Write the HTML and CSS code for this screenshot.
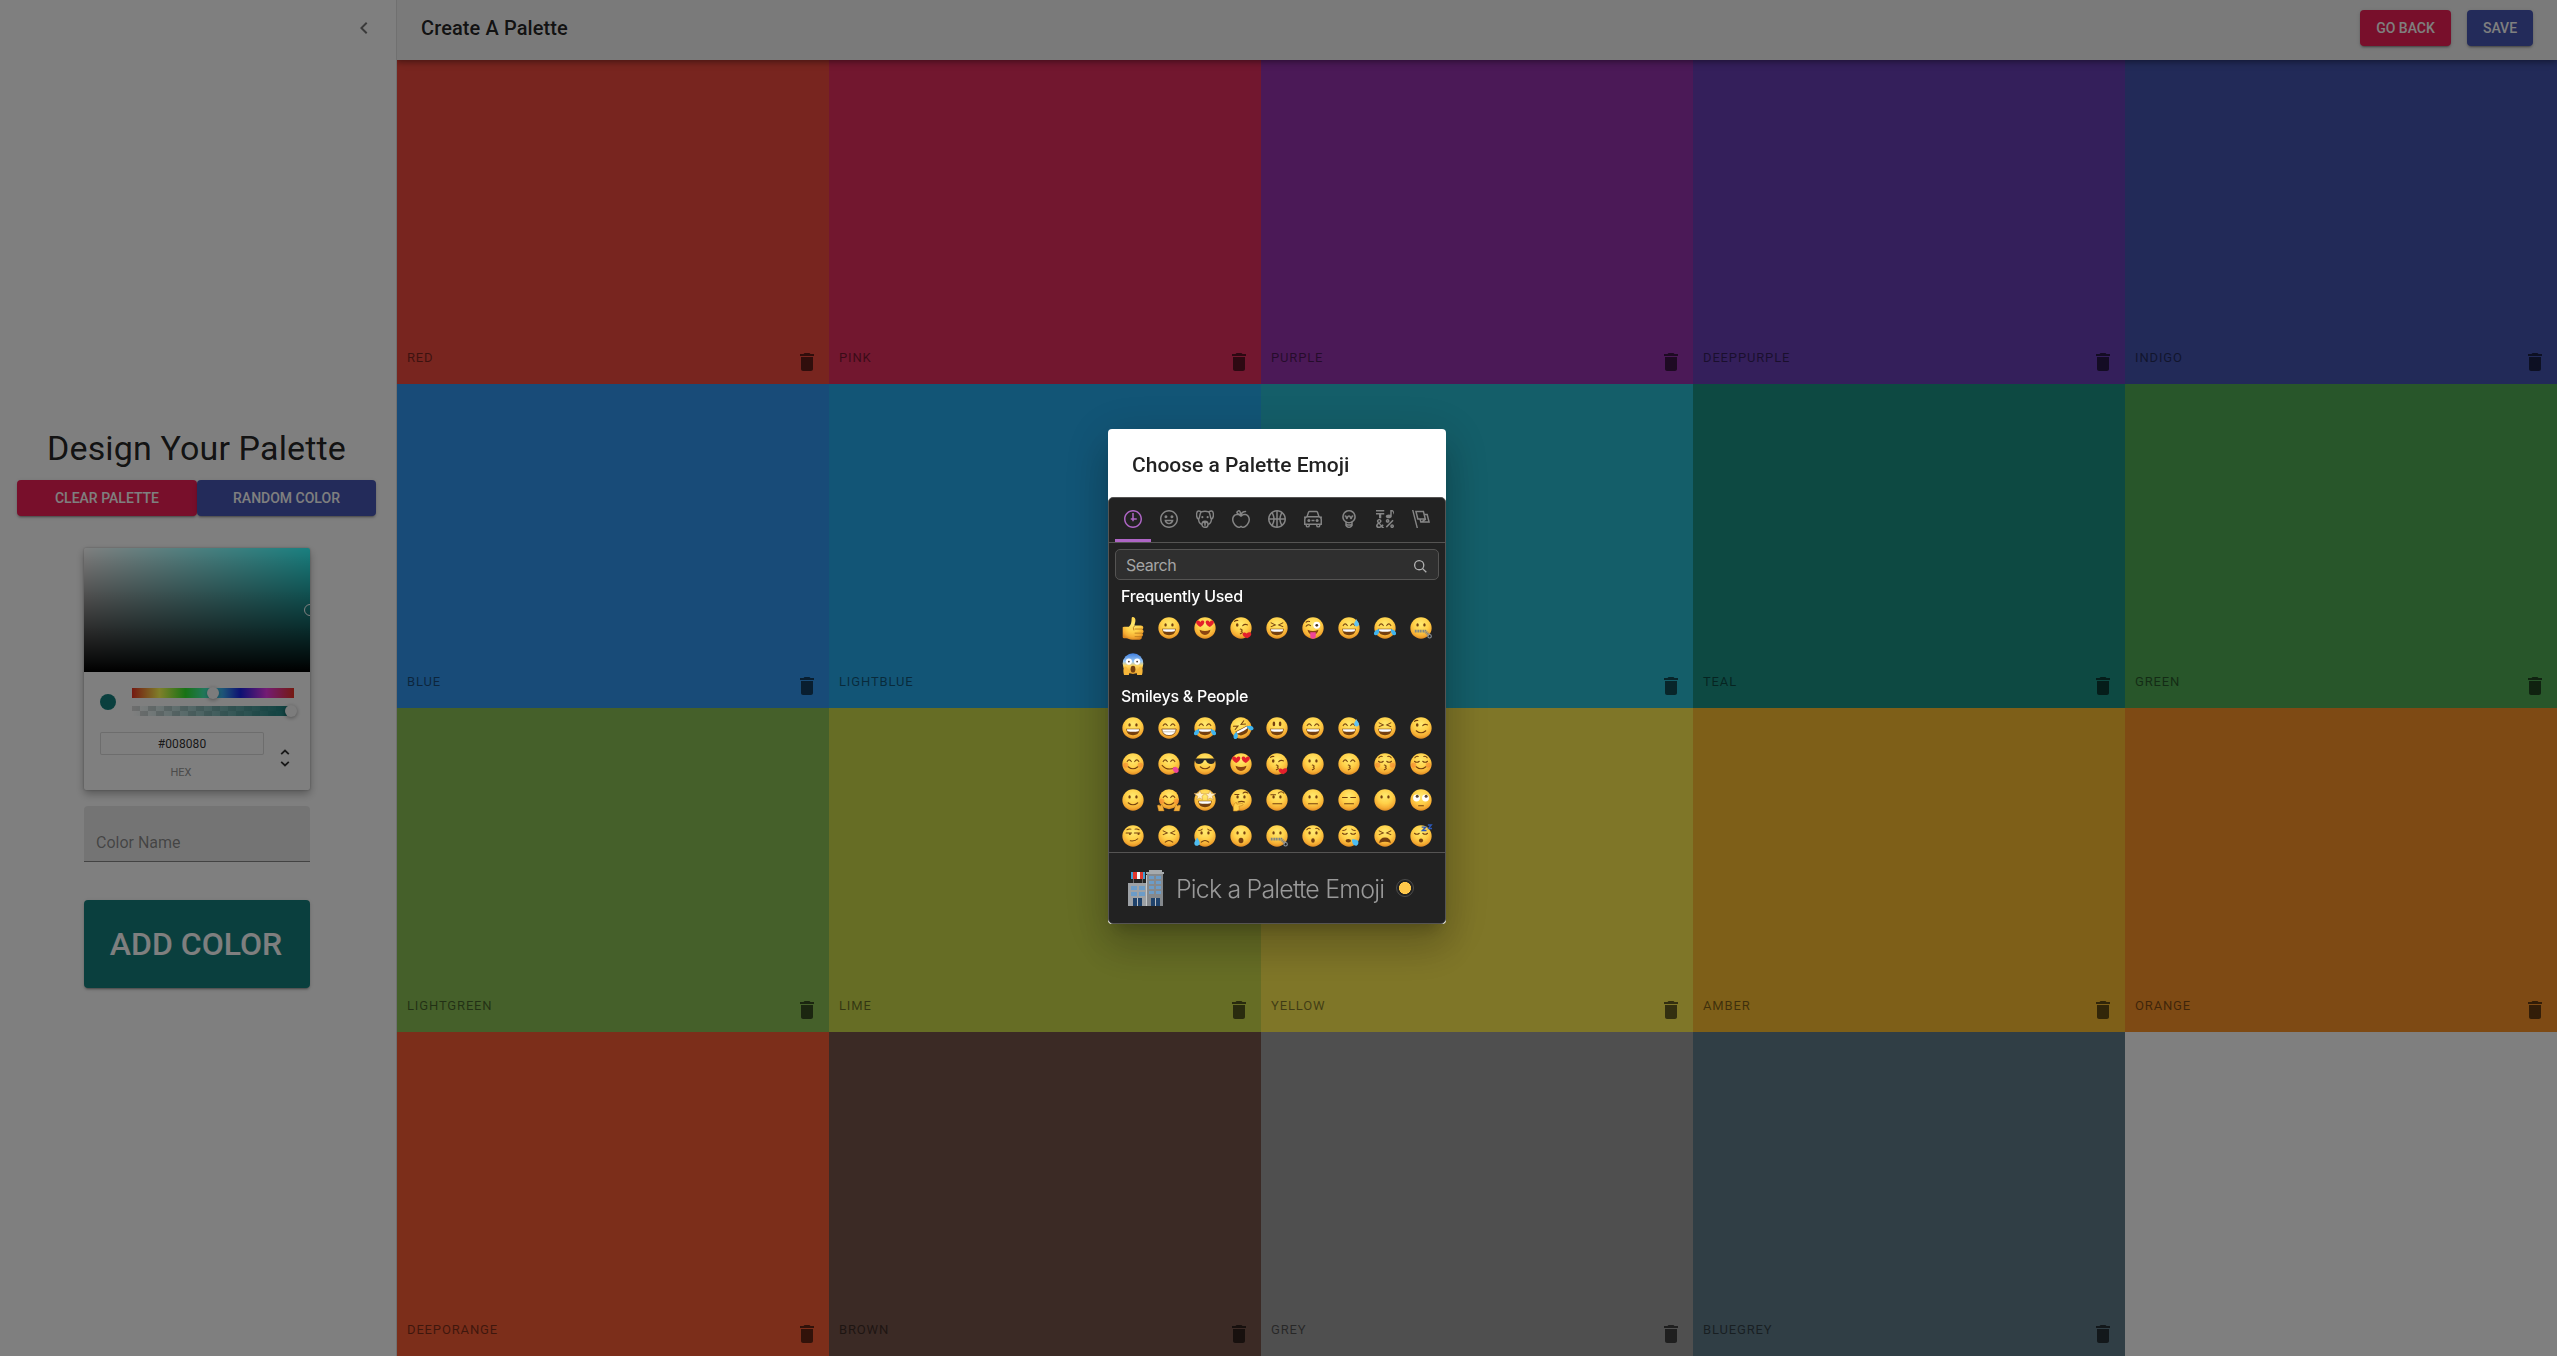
FILE: index.html
```html
<!DOCTYPE html>
<html lang="en">
<head>
<meta charset="utf-8">
<title>Create A Palette</title>
<link rel="stylesheet" href="styles.css">
</head>
<body>
<svg class="defs" aria-hidden="true">
  <defs>
    <radialGradient id="skin" cx=".5" cy=".32" r=".7"><stop offset="0" stop-color="#ffea70"/><stop offset=".5" stop-color="#ffd048"/><stop offset=".8" stop-color="#f5ac33"/><stop offset="1" stop-color="#d98520"/></radialGradient>
    <linearGradient id="scared" x1="0" y1="0" x2="0" y2="1"><stop offset="0" stop-color="#3f7fe0"/><stop offset=".4" stop-color="#9cc8f2"/><stop offset=".6" stop-color="#ffd65c"/><stop offset="1" stop-color="#e9a02a"/></linearGradient>
    <circle id="face" cx="16" cy="16" r="15.5" fill="url(#skin)"/>
    <g id="dots" fill="#75400f"><ellipse cx="11" cy="11.5" rx="1.7" ry="2.300"/><ellipse cx="21" cy="11.5" rx="1.7" ry="2.300"/></g>
    <g id="tall" fill="#75400f"><ellipse cx="11.5" cy="10" rx="1.9" ry="3.6"/><ellipse cx="20.5" cy="10" rx="1.9" ry="3.6"/></g>
    <g id="arcs" class="ln"><path d="M7.5 12.5q3-5 6 0M18.500 12.500q3-5 6 0"/></g>
    <g id="shut" class="ln"><path d="M6.500 12q3.500 3 7 0M18.500 12q3.500 3 7 0"/></g>
    <g id="squint" class="ln"><path d="M7.500 8.500l6 3-6 2.500M24.500 8.500l-6 3 6 2.500"/></g>
    <g id="wink"><ellipse cx="10.500" cy="11.500" rx="1.900" ry="2.500" fill="#75400f"/><path class="ln" d="M18.500 12.500q3-3 7-1M6.500 6.500q2-2 5-1.500"/></g>
    <g id="hearts" fill="#e4202c"><path d="M9 14.500C1 9.500 2.500 5 5.500 5S9 7.500 9 7.500 10 4.500 13 5s3.500 5.500-4 9.500z"/><path d="M23 14.500C31 9.500 29.500 5 26.500 5S23 7.500 23 7.500 22 4.500 19 5s-3.500 5.500 4 9.500z"/></g>
    <g id="grin"><path d="M6 17h20q-1 9.500-10 9.500T6 17z" fill="#75400f"/><path d="M7 17.800h18l-.8 2.900q-8.200 1.800-16.400 0z" fill="#fff"/></g>
    <g id="teeth"><path d="M5.500 17.500h21q-1 9.500-10.500 9.500T5.500 17.500z" fill="#fff" stroke="#75400f" stroke-width="1.100"/><path d="M6.500 21.500h19" stroke="#b5a58d"/></g>
    <path id="smile" class="ln" d="M9 20q7 6 14 0"/>
    <path id="bigsmile" d="M8 18.500q8 4 16 0-1.500 7.500-8 7.500t-8-7.500z" fill="#8a4511"/>
    <path id="frown" class="ln" d="M10.500 25q5.500-5 11 0"/>
    <path id="flat" class="ln" d="M9.500 21.500h13"/>
    <path id="kiss" class="ln" d="M15 17.500q4.500 1 1.500 3 3.500 2-1.500 4"/>
    <path id="lips" d="M25 31c-8-3-8-8-4.500-8.500 2-.5 3.500 1.500 3.500 1.500s2.500-3 5.500-1.500S31 28 25 31z" fill="#e4202c"/>
    <g id="blush" fill="#f4722b" opacity=".45"><circle cx="5.500" cy="17.500" r="3.800"/><circle cx="26.500" cy="17.500" r="3.800"/></g>
    <path id="tears" d="M0 25q-1-5 7.500-7.500Q8 25 3.500 26.500 1 27 0 25zM32 25q1-5-7.500-7.500 0 7.500 4 9 2.500.5 3.500-1.500z" fill="#3fb4ef"/>
    <path id="sweat" d="M26.500 3c3 5 5 7 3.500 9.500-2 2.500-6 1.500-6.500-1.500C23 8.500 25.500 6.500 26.500 3z" fill="#62c3f2"/>
    <path id="drop" d="M4.500 18c3.500 5 4.500 7 3.500 10-1.500 3-6.500 3-7.500-.5C-.3 24.500 3 21.500 4.500 18z" fill="#4dbdf2"/>
    <g id="brows" class="ln"><path d="M7 7q2-3 5-2M25 7q-2-3-5-2"/></g>
    <g id="zip"><path d="M7 20.500h15l6 6" stroke="#75808c" stroke-width="4" fill="none" stroke-dasharray="1.600 .8"/><circle cx="28.500" cy="28" r="2.500" fill="none" stroke="#8d969e" stroke-width="1.600"/></g>

    <symbol id="e-grin" viewBox="0 0 32 32"><use href="#face"/><use href="#dots"/><use href="#grin"/></symbol>
    <symbol id="e-heart" viewBox="0 0 32 32"><use href="#face"/><use href="#hearts"/><use href="#bigsmile"/></symbol>
    <symbol id="e-kissheart" viewBox="0 0 32 32"><use href="#face"/><use href="#wink"/><use href="#kiss"/><use href="#lips"/></symbol>
    <symbol id="e-laugh" viewBox="0 0 32 32"><use href="#face"/><use href="#squint"/><use href="#grin"/></symbol>
    <symbol id="e-sweat" viewBox="0 0 32 32"><use href="#face"/><use href="#arcs"/><use href="#grin"/><use href="#sweat"/></symbol>
    <symbol id="e-joy" viewBox="0 0 32 32"><use href="#face"/><use href="#arcs"/><use href="#grin"/><use href="#tears"/></symbol>
    <symbol id="e-zip" viewBox="0 0 32 32"><use href="#face"/><use href="#dots"/><use href="#zip"/></symbol>
    <symbol id="e-arcgrin" viewBox="0 0 32 32"><use href="#face"/><use href="#arcs"/><use href="#grin"/></symbol>
    <symbol id="trash" viewBox="0 0 24 24"><path d="M6 19c0 1.100.900 2 2 2h8c1.100 0 2-.900 2-2V7H6v12zM19 4h-3.500l-1-1h-5l-1 1H5v2h14V4z"/></symbol>
  </defs>
</svg>

<div class="app">
  <aside class="drawer">
    <div class="drawer-head">
      <svg class="chevron" viewBox="0 0 24 24"><path d="M15.410 7.410L14 6l-6 6 6 6 1.410-1.410L10.830 12z"/></svg>
    </div>
    <div class="designer">
      <h4>Design Your Palette</h4>
      <div class="actions">
        <button class="btn pink wide-a">Clear Palette</button>
        <button class="btn indigo wide-b">Random Color</button>
      </div>
      <div class="chrome">
        <div class="saturation"><span class="sat-pointer"></span></div>
        <div class="chrome-body">
          <div class="controls">
            <span class="active-color"></span>
            <div class="sliders">
              <div class="hue"><span class="knob knob-hue"></span></div>
              <div class="alpha"><span class="knob knob-alpha"></span></div>
            </div>
          </div>
          <div class="fields">
            <div class="hex"><div class="hex-input">#008080</div><div class="hex-label">HEX</div></div>
            <svg class="toggle" viewBox="0 0 10 18"><path d="M1.200 5.200L5 1.500l3.800 3.700M1.200 12.800L5 16.500l3.800-3.700"/></svg>
          </div>
        </div>
      </div>
      <div class="name-field">Color Name</div>
      <button class="btn add">Add Color</button>
    </div>
  </aside>

  <main class="main">
    <header class="appbar">
      <h6>Create A Palette</h6>
      <div class="nav-btns">
        <button class="btn pink back">Go Back</button>
        <button class="btn indigo save">Save</button>
      </div>
    </header>
    <div class="grid">
      <div class="box c-red"><span>red</span><svg><use href="#trash"/></svg></div>
      <div class="box c-pink"><span>pink</span><svg><use href="#trash"/></svg></div>
      <div class="box c-purple"><span>purple</span><svg><use href="#trash"/></svg></div>
      <div class="box c-deeppurple"><span>deeppurple</span><svg><use href="#trash"/></svg></div>
      <div class="box c-indigo"><span>indigo</span><svg><use href="#trash"/></svg></div>
      <div class="box c-blue"><span>blue</span><svg><use href="#trash"/></svg></div>
      <div class="box c-lightblue"><span>lightblue</span><svg><use href="#trash"/></svg></div>
      <div class="box c-cyan"><span>cyan</span><svg><use href="#trash"/></svg></div>
      <div class="box c-teal"><span>teal</span><svg><use href="#trash"/></svg></div>
      <div class="box c-green"><span>green</span><svg><use href="#trash"/></svg></div>
      <div class="box c-lightgreen"><span>lightgreen</span><svg><use href="#trash"/></svg></div>
      <div class="box c-lime"><span>lime</span><svg><use href="#trash"/></svg></div>
      <div class="box c-yellow"><span>yellow</span><svg><use href="#trash"/></svg></div>
      <div class="box c-amber"><span>amber</span><svg><use href="#trash"/></svg></div>
      <div class="box c-orange"><span>orange</span><svg><use href="#trash"/></svg></div>
      <div class="box c-deeporange"><span>deeporange</span><svg><use href="#trash"/></svg></div>
      <div class="box c-brown"><span>brown</span><svg><use href="#trash"/></svg></div>
      <div class="box c-grey"><span>grey</span><svg><use href="#trash"/></svg></div>
      <div class="box c-bluegrey"><span>bluegrey</span><svg><use href="#trash"/></svg></div>
    </div>
  </main>
</div>

<div class="backdrop">
  <div class="dialog">
    <h2>Choose a Palette Emoji</h2>
    <section class="picker">
      <nav class="anchors">
        <span class="anchor selected"><svg viewBox="0 0 24 24"><path d="M13 4h-2l-.001 7H9v2h2v2h2v-2h4v-2h-4z"/><path d="M12 0C5.373 0 0 5.373 0 12s5.373 12 12 12 12-5.373 12-12S18.627 0 12 0m0 22C6.486 22 2 17.514 2 12S6.486 2 12 2s10 4.486 10 10-4.486 10-10 10"/></svg></span>
        <span class="anchor"><svg viewBox="0 0 24 24"><path d="M12 0C5.373 0 0 5.373 0 12s5.373 12 12 12 12-5.373 12-12S18.627 0 12 0m0 22C6.486 22 2 17.514 2 12S6.486 2 12 2s10 4.486 10 10-4.486 10-10 10"/><path d="M8 7a2 2 0 1 0-.001 3.999A2 2 0 0 0 8 7M16 7a2 2 0 1 0-.001 3.999A2 2 0 0 0 16 7M15.232 15c-.693 1.195-1.870 2-3.349 2-1.477 0-2.655-.805-3.347-2H15m3-2H6a6 6 0 1 0 12 0"/></svg></span>
        <span class="anchor"><svg viewBox="0 0 24 24"><path class="st" d="M7 2.500C4 .5 1.500 1 1 4s0 7 2.500 8.500C3.500 16 5 18 8 19.500M17 2.500c3-2 5.500-1.500 6 1.500s0 7-2.500 8.500c0 3.500-1.500 5.500-4.500 7M7 2.500q5-1.500 10 0M7 2.500C4.500 5 5.500 10 3.500 12.500M17 2.500c2.500 2.500 1.500 7.500 3.500 10M8 19.500c0-3 1-4.500 4-4.500s4 1.500 4 4.500c0 2-1.500 3.500-4 3.500s-4-1.500-4-3.500z"/><circle cx="8.500" cy="9.500" r="1.400"/><circle cx="15.500" cy="9.500" r="1.400"/><path d="M9 14.500h6q0 3-3 4-3-1-3-4zM11 17h2v4h-2z"/></svg></span>
        <span class="anchor"><svg viewBox="0 0 24 24"><path d="M17 4.978c-1.838 0-2.876.396-3.680.934.513-1.172 1.768-2.934 4.680-2.934a1 1 0 0 0 0-2c-2.921 0-4.629 1.365-5.547 2.512-.064.078-.119.162-.180.244C11.730 1.838 10.798.023 9.207.023 8.579.022 7.850.306 7 .978 5.027 2.540 5.329 3.902 6.492 4.999 3.609 5.222 0 7.352 0 12.969c0 4.582 4.961 11.009 9 11.009 1.975 0 2.371-.486 3-1 .629.514 1.025 1 3 1 4.039 0 9-6.418 9-11 0-5.953-4.055-8-7-8M8.242 2.546c.641-.508.943-.523.965-.523.426.169.975 1.405 1.357 3.055-1.527-.629-2.741-1.352-2.980-1.846.059-.112.241-.356.658-.686M15 21.978c-1.080 0-1.210-.109-1.559-.402l-.176-.146c-.367-.302-.816-.452-1.266-.452s-.898.150-1.266.452l-.176.146c-.347.292-.477.402-1.557.402-2.813 0-7-5.389-7-9.009 0-5.823 4.488-5.991 5-5.991 1.939 0 2.484.471 3.387 1.251l.323.276a1.995 1.995 0 0 0 2.580 0l.323-.276c.902-.780 1.447-1.251 3.387-1.251.512 0 5 .168 5 6 0 3.617-4.187 9-7 9"/></svg></span>
        <span class="anchor"><svg viewBox="0 0 24 24"><path d="M12 0C5.373 0 0 5.372 0 12c0 6.627 5.373 12 12 12 6.628 0 12-5.373 12-12 0-6.628-5.372-12-12-12m9.949 11H17.050c.224-2.527 1.232-4.773 1.968-6.113A9.966 9.966 0 0 1 21.949 11M13 11V2.051a9.945 9.945 0 0 1 4.432 1.564c-.858 1.491-2.156 4.220-2.392 7.385H13zm-2 0H8.961c-.238-3.165-1.536-5.894-2.393-7.385A9.950 9.950 0 0 1 11 2.051V11zm0 2v8.949a9.937 9.937 0 0 1-4.432-1.564c.857-1.492 2.155-4.221 2.393-7.385H11zm4.040 0c.236 3.164 1.534 5.893 2.392 7.385A9.920 9.920 0 0 1 13 21.949V13h2.040zM4.982 4.887C5.718 6.227 6.726 8.473 6.951 11h-4.900a9.977 9.977 0 0 1 2.931-6.113M2.051 13h4.900c-.226 2.527-1.233 4.771-1.969 6.113A9.972 9.972 0 0 1 2.051 13m16.967 6.113c-.735-1.342-1.744-3.586-1.968-6.113h4.899a9.961 9.961 0 0 1-2.931 6.113"/></svg></span>
        <span class="anchor"><svg viewBox="0 0 24 24"><path class="st" d="M4 9l2-6q.5-1 1.500-1h9q1 0 1.500 1l2 6M1 19v-6.500Q1 9 4.500 9h15Q23 9 23 12.500V19zM0 9.500h3M21 9.500h3M3 19v1.500q0 2 2 2t2-2V19M17 19v1.500q0 2 2 2t2-2V19"/><circle cx="6.500" cy="14" r="2"/><circle cx="17.500" cy="14" r="2"/><path d="M10 13h4v2h-4z"/></svg></span>
        <span class="anchor"><svg viewBox="0 0 24 24"><path fill-rule="evenodd" d="M12 0a9 9 0 0 0-5 16.482V21s2.035 3 5 3 5-3 5-3v-4.518A9 9 0 0 0 12 0zm0 2c3.860 0 7 3.141 7 7s-3.140 7-7 7-7-3.141-7-7 3.140-7 7-7zM9 17.477c.940.332 1.946.523 3 .523s2.060-.190 3-.523v.834c-.910.436-1.925.689-3 .689a6.924 6.924 0 0 1-3-.690v-.833zm.236 3.070A8.854 8.854 0 0 0 12 21c.965 0 1.888-.167 2.758-.451C14.155 21.173 13.153 22 12 22c-1.102 0-2.117-.789-2.764-1.453z"/><path d="M14.745 12.449h-.004c-.852-.024-1.188-.858-1.577-1.824-.421-1.061-.703-1.561-1.182-1.566h-.009c-.481 0-.783.497-1.235 1.537-.436.982-.801 1.811-1.636 1.791l-.276-.043c-.565-.171-.853-.691-1.284-1.794-.125-.313-.202-.632-.270-.913-.051-.213-.127-.530-.195-.634C7.067 9.004 7.039 9 6.990 9A1 1 0 0 1 7 7h.010c1.662.017 2.015 1.373 2.198 2.134.486-.981 1.304-2.058 2.797-2.075 1.531.018 2.280 1.153 2.731 2.141l.002-.008C14.944 8.424 15.327 7 16.979 7h.032A1 1 0 1 1 17 9h-.011c-.149.076-.256.474-.319.709a6.484 6.484 0 0 1-.311.951c-.429.973-.790 1.789-1.614 1.789"/></svg></span>
        <span class="anchor"><svg viewBox="0 0 24 24"><path d="M0 0h11v2H0zM4 11h3V6h4V4H0v2h4zM15.500 17c1.381 0 2.500-1.116 2.500-2.493s-1.119-2.493-2.500-2.493S13 13.130 13 14.507 14.119 17 15.500 17m0-2.986c.276 0 .500.222.500.493 0 .272-.224.493-.500.493s-.500-.221-.500-.493.224-.493.500-.493M21.500 19.014c-1.381 0-2.500 1.116-2.500 2.493S20.119 24 21.500 24s2.500-1.116 2.500-2.493-1.119-2.493-2.500-2.493m0 2.986a.497.497 0 0 1-.500-.493c0-.271.224-.493.500-.493s.500.222.500.493a.497.497 0 0 1-.500.493M22 13l-9 9 1.513 1.500 8.990-9.009zM17 11c2.209 0 4-1.119 4-2.500V2s.985-.161 1.498.949C23.010 4.055 23 6 23 6s1-1.119 1-3.135C24-.020 21 0 21 0h-2v6.347A5.853 5.853 0 0 0 17 6c-2.209 0-4 1.119-4 2.500s1.791 2.500 4 2.500M10.297 20.482l-1.475-1.585a47.540 47.540 0 0 1-1.442 1.129c-.307-.288-.989-1.016-2.045-2.183.902-.836 1.479-1.466 1.729-1.892s.376-.871.376-1.336c0-.592-.273-1.178-.818-1.759-.546-.581-1.329-.871-2.349-.871-1.008 0-1.790.293-2.344.879-.556.587-.832 1.181-.832 1.784 0 .813.419 1.748 1.256 2.805-.847.614-1.444 1.208-1.794 1.784a3.465 3.465 0 0 0-.523 1.833c0 .857.308 1.560.924 2.107.616.549 1.423.823 2.420.823 1.173 0 2.444-.379 3.813-1.137L8.235 24h2.819l-2.090-2.383 1.333-1.135zm-6.736-6.389a1.020 1.020 0 0 1 .730-.286c.310 0 .559.085.747.254a.849.849 0 0 1 .283.659c0 .518-.419 1.112-1.257 1.784-.536-.651-.805-1.231-.805-1.742a.901.901 0 0 1 .302-.669M3.740 22c-.427 0-.778-.116-1.057-.349-.279-.232-.418-.487-.418-.766 0-.594.509-1.288 1.527-2.083.968 1.134 1.717 1.946 2.248 2.438-.921.507-1.686.760-2.300.760"/></svg></span>
        <span class="anchor"><svg viewBox="0 0 24 24"><path fill-rule="evenodd" d="M0 0l6.084 24H8L1.916 0zM21 5h-4l-1-4H4l3 12h3l1 4h13L21 5zM6.563 3h7.875l2 8H8.563l-2-8zm8.832 10l-2.856 1.904L12.063 13h3.332zM19 13l-1.500-6h1.938l2 8H16l3-2z"/></svg></span>
      </nav>
      <div class="search"><span>Search</span><svg viewBox="0 0 20 20"><path d="M12.900 14.320a8 8 0 1 1 1.410-1.410l5.350 5.330-1.420 1.420-5.330-5.340zM8 14A6 6 0 1 0 8 2a6 6 0 0 0 0 12z"/></svg></div>
      <div class="scroll">
        <div class="label">Frequently Used</div>
        <div class="emojis">
          <svg viewBox="0 0 32 32"><path d="M1 15q0-1 2-1h7c3-2 4-7 4-12 0-3 5-3 5.500 2 .3 3-1 6-1.500 8.500h9.500c4 0 4.500 4.500 2 5.500 3 1.500 2 5 0 5.500 2 1.500 1 4.500-1 5 1 2 0 4.500-3 4.500H15c-4 0-6-2-9-2H3q-2 0-2-2z" fill="url(#skin)"/><path class="ln thin" d="M19 17.500h10M19 23.500h10M19 28.500h8M18 13q-3 2-1 6"/></svg>
          <svg><use href="#e-grin"/></svg>
          <svg><use href="#e-heart"/></svg>
          <svg><use href="#e-kissheart"/></svg>
          <svg><use href="#e-laugh"/></svg>
          <svg viewBox="0 0 32 32"><use href="#face"/><path class="ln" d="M6 13.500q3-4 6.500-1M6 7.500q2-2 5-1"/><circle cx="21.500" cy="12" r="5" fill="#fff"/><circle cx="21.500" cy="12" r="2" fill="#4a3424"/><use href="#bigsmile"/><path d="M12 22h8v5.500q0 4-4 4t-4-4z" fill="#f0459a"/></svg>
          <svg><use href="#e-sweat"/></svg>
          <svg><use href="#e-joy"/></svg>
          <svg><use href="#e-zip"/></svg>
          <svg viewBox="0 0 32 32"><circle cx="16" cy="15.500" r="15" fill="url(#scared)"/><circle cx="10" cy="12.500" r="4.500" fill="#fff"/><circle cx="22" cy="12.500" r="4.500" fill="#fff"/><circle cx="10" cy="12.500" r="1.300" fill="#4a3424"/><circle cx="22" cy="12.500" r="1.300" fill="#4a3424"/><ellipse cx="16" cy="23.500" rx="3.500" ry="5" fill="#75400f"/><path d="M3 32q-2-7 0-11 2-3 4 0l4 6-1 5zM29 32q2-7 0-11-2-3-4 0l-4 6 1 5z" fill="#f6b63a"/></svg>
        </div>
        <div class="label">Smileys &amp; People</div>
        <div class="emojis">
          <svg><use href="#e-grin"/></svg>
          <svg viewBox="0 0 32 32"><use href="#face"/><use href="#arcs"/><use href="#teeth"/></svg>
          <svg><use href="#e-joy"/></svg>
          <svg viewBox="0 0 32 32"><g transform="rotate(-28 16 16)"><use href="#face"/><use href="#squint"/><use href="#grin"/><use href="#tears"/></g></svg>
          <svg viewBox="0 0 32 32"><use href="#face"/><use href="#tall"/><use href="#grin"/></svg>
          <svg><use href="#e-arcgrin"/></svg>
          <svg><use href="#e-sweat"/></svg>
          <svg><use href="#e-laugh"/></svg>
          <svg viewBox="0 0 32 32"><use href="#face"/><use href="#wink"/><use href="#smile"/></svg>

          <svg viewBox="0 0 32 32"><use href="#face"/><use href="#blush"/><use href="#arcs"/><use href="#smile"/></svg>
          <svg viewBox="0 0 32 32"><use href="#face"/><use href="#arcs"/><path class="ln" d="M6 18q8 9 19 3"/><path d="M21 22.500q4-5 8 0 3 5-2 6.500-4 0-6-6.500z" fill="#f0459a"/></svg>
          <svg viewBox="0 0 32 32"><use href="#face"/><path d="M1 8h30l-1 5q-1 3-5 3-6 0-7.500-5.500h-3Q13 16 7 16q-4 0-5-3z" fill="#262626"/><use href="#smile"/></svg>
          <svg><use href="#e-heart"/></svg>
          <svg><use href="#e-kissheart"/></svg>
          <svg viewBox="0 0 32 32"><use href="#face"/><use href="#dots"/><use href="#kiss"/></svg>
          <svg viewBox="0 0 32 32"><use href="#face"/><use href="#arcs"/><use href="#kiss"/></svg>
          <svg viewBox="0 0 32 32"><use href="#face"/><use href="#blush"/><use href="#shut"/><use href="#brows"/><use href="#kiss"/></svg>
          <svg viewBox="0 0 32 32"><use href="#face"/><use href="#blush"/><use href="#shut"/><use href="#brows"/><use href="#smile"/></svg>

          <svg viewBox="0 0 32 32"><use href="#face"/><use href="#dots"/><use href="#smile"/></svg>
          <svg viewBox="0 0 32 32"><circle cx="16" cy="15" r="14.500" fill="url(#skin)"/><use href="#blush"/><use href="#arcs"/><use href="#smile"/><path d="M-1 24l3-1 1 2 2-3 2 3 2 7H1zM33 24l-3-1-1 2-2-3-2 3-2 7h8z" fill="#f3b03b" stroke="#b9741c" stroke-width=".6"/></svg>
          <svg viewBox="0 0 32 32"><use href="#face"/><path d="M8.500 2l2 4.500 5 .5-4 3.500 1 5-4-2.500-4.500 2.500 1.500-5L0 6.500 6.500 6zM23.500 2l2 4.500 6.500 0-5.500 4 1.500 5-4.500-2.500-4 2.500 1-5-4-3.500 5-.5z" fill="#fff0c8" stroke="#c98a35" stroke-width=".7"/><use href="#grin"/></svg>
          <svg viewBox="0 0 32 32"><use href="#face"/><use href="#dots"/><path class="ln" d="M7 8h6M19 6q3-3 7 0M12 19q5-2 9 0"/><path d="M5 32q-1-6 1-10l3-3 1 3 8-1q2 1 0 3l-5 1q2 6-3 7z" fill="#ffcf4a" stroke="#c98521" stroke-width=".9"/></svg>
          <svg viewBox="0 0 32 32"><use href="#face"/><use href="#dots"/><path class="ln" d="M7 8.500h7M18 6q4-4 8 0M10 21.500h13"/></svg>
          <svg viewBox="0 0 32 32"><use href="#face"/><use href="#dots"/><use href="#flat"/></svg>
          <svg viewBox="0 0 32 32"><use href="#face"/><path class="ln" d="M6.500 12.500h7M18.500 12.500h7"/><use href="#flat"/></svg>
          <svg viewBox="0 0 32 32"><use href="#face"/><use href="#dots"/></svg>
          <svg viewBox="0 0 32 32"><use href="#face"/><circle cx="9.500" cy="13" r="5" fill="#fff"/><circle cx="22.500" cy="13" r="5" fill="#fff"/><circle cx="10.500" cy="10.500" r="2.200" fill="#5d4636"/><circle cx="23.500" cy="10.500" r="2.200" fill="#5d4636"/><path class="ln" d="M12.500 24.500h7"/></svg>

          <svg viewBox="0 0 32 32"><use href="#face"/><path class="ln" d="M6 11.500h8M18 11.500h8M7 7q3-2 6-1M19 6q3-1 6 1M12 23q7 1 11-3"/><circle cx="11.500" cy="13" r="1.500" fill="#75400f"/><circle cx="24" cy="13" r="1.500" fill="#75400f"/></svg>
          <svg viewBox="0 0 32 32"><use href="#face"/><use href="#squint"/><use href="#frown"/></svg>
          <svg viewBox="0 0 32 32"><use href="#face"/><use href="#dots"/><path class="ln" d="M7 8q4 0 5-2M25 8q-4 0-5-2"/><use href="#frown"/><use href="#drop"/></svg>
          <svg viewBox="0 0 32 32"><use href="#face"/><use href="#dots"/><ellipse cx="16" cy="22.500" rx="3.500" ry="4" fill="#75400f"/></svg>
          <svg><use href="#e-zip"/></svg>
          <svg viewBox="0 0 32 32"><use href="#face"/><use href="#dots"/><use href="#brows"/><ellipse cx="16" cy="22.500" rx="2.600" ry="3.200" fill="#75400f"/></svg>
          <svg viewBox="0 0 32 32"><use href="#face"/><use href="#shut"/><path class="ln" d="M7 8q4 0 5-2M25 8q-4 0-5-2"/><ellipse cx="15" cy="23" rx="4" ry="2.500" fill="#75400f"/><path d="M20 21q6-1 9 2 2 5-2 7-6 1-7-9z" fill="#4dbdf2"/></svg>
          <svg viewBox="0 0 32 32"><use href="#face"/><use href="#squint"/><path d="M7.500 26q1-8 8.500-8t8.500 8q-8.500-3-17 0z" fill="#75400f"/></svg>
          <svg viewBox="0 0 32 32"><use href="#face"/><use href="#shut"/><ellipse cx="16" cy="22.500" rx="3" ry="3" fill="#75400f"/><path d="M17 3h6l-5 5h6M26 0h5l-4 5h5" fill="none" stroke="#2c58b8" stroke-width="2"/></svg>
        </div>
      </div>
      <footer class="preview">
        <svg class="store" viewBox="0 0 36 36">
          <path d="M0 13h19v23H0z" fill="#9da1a5"/><path d="M19 2h16v34H19z" fill="#85898d"/><path d="M21 0h13v2h2v2H18V2h3z" fill="#a6aaad"/>
          <path d="M3 2h14v7H3z" fill="#f2f4f6"/><path d="M3 2h2v7H3z" fill="#3f9fd8"/><path d="M5 2h4v7H5zM12 2h3v7h-3z" fill="#e0382f"/><path d="M15 2h2v7h-2z" fill="#3f9fd8"/><path d="M5 9h1v4H5zM14 9h1v4h-1z" fill="#666"/>
          <path d="M3 16h6v4H3zM11 16h6v4h-6zM3 22h6v4H3zM11 22h6v4h-6zM21 6h5v3h-5zM28 6h5v3h-5zM21 11h5v3h-5zM28 11h5v3h-5zM21 16h5v3h-5zM28 16h5v3h-5zM21 21h5v3h-5zM28 21h5v3h-5z" fill="#6c9cc8"/>
          <path d="M5 28h9v8H5zM23 28h9v8h-9z" fill="#1f426b"/><path d="M9 28h1v8H9zM27 28h1v8h-1z" fill="#b8bcc0"/><path d="M18 5h1v31h-1z" fill="#c5c8ca"/>
        </svg>
        <span class="preview-title">Pick a Palette Emoji</span>
        <span class="skin"></span>
      </footer>
    </section>
  </div>
</div>
</body>
</html>
```
FILE: styles.css
```css
* { box-sizing: border-box; }
body { margin: 0; overflow: hidden; background: #fff; font-family: Roboto, "Liberation Sans", sans-serif; color: rgba(0,0,0,.87); }
h2, h4, h6 { margin: 0; }
.defs { position: absolute; width: 0; height: 0; }
.app { display: flex; height: 1356px; }

.drawer { position: relative; z-index: 1; width: 397px; flex: none; border-right: 1px solid #e0e0e0; background: #fff; }
.drawer-head { height: 56px; display: flex; align-items: center; justify-content: flex-end; padding-right: 20px; }
.chevron { width: 24px; height: 24px; fill: rgba(0,0,0,.54); }
.designer { display: flex; flex-direction: column; align-items: center; padding-top: 371px; }
h4 { font-size: 34px; font-weight: 400; line-height: 42px; letter-spacing: .14px; padding-right: 3px; }
.actions { display: flex; margin: 11px 3px 0 0; }

.btn { height: 36px; border: 0; border-radius: 4px; padding: 0; font: 500 14px/24.5px Roboto, sans-serif; letter-spacing: 0; text-transform: uppercase; color: #fff; box-shadow: 0 3px 1px -2px rgba(0,0,0,.2), 0 2px 2px rgba(0,0,0,.14), 0 1px 5px rgba(0,0,0,.12); }
.pink { background: #f01e56; }
.indigo { background: #4656b4; }
.wide-a { width: 180px; }
.wide-b { width: 179px; }
.back { width: 91px; }
.save { width: 66px; }

.chrome { width: 226px; height: 242px; margin-top: 32px; margin-right: 2px; border-radius: 2px; background: #fff; box-shadow: 0 0 2px rgba(0,0,0,.3), 0 4px 8px rgba(0,0,0,.3); }
.saturation { position: relative; height: 124px; overflow: hidden; border-radius: 2px 2px 0 0; background: linear-gradient(to top, #000, transparent), linear-gradient(to right, #fff, #34ffff); }
.sat-pointer { position: absolute; left: 220px; top: 56px; width: 12px; height: 12px; border: 1.500px solid #fff; border-radius: 50%; }
.chrome-body { padding: 16px; }
.controls { display: flex; }
.active-color { width: 16px; height: 16px; margin: 6px 16px 0 0; border-radius: 50%; background: #157f7d; }
.sliders { flex: 1; display: grid; gap: 8px; }
.hue, .alpha { position: relative; height: 10px; }
.hue { background: linear-gradient(to right, #ea3323, #ffff54 17%, #30e62b 33%, #4cf5f5 50%, #1a20e6 67%, #e838e8 83%, #ea3323); }
.alpha { background: linear-gradient(to right, rgba(21,127,125,0), #157f7d), conic-gradient(#fff 25%, #dcdcdc 0 50%, #fff 0 75%, #dcdcdc 0) 0 -3px / 16px 16px; }
.knob { position: absolute; top: -1px; width: 12px; height: 12px; border-radius: 50%; background: #f8f8f8; box-shadow: 0 1px 4px rgba(0,0,0,.37); }
.knob-hue { left: 75px; }
.knob-alpha { left: 153px; }
.fields { display: flex; padding-top: 16px; }
.hex { width: 164px; font-size: 11px; text-align: center; }
.hex-input { height: 23px; line-height: 24px; border-radius: 2px; box-shadow: inset 0 0 0 1px #dadada; font-size: 12px; letter-spacing: .1px; color: #333; }
.hex-label { margin-top: 12px; padding-right: 2px; line-height: 11px; color: #969696; }
.toggle { width: 10px; height: 18px; margin: 17px 0 0 16px; fill: none; stroke: #333; stroke-width: 1.800; }
.name-field { width: 226px; height: 56px; margin: 16px 2px 0 0; padding: 26px 12px 0; border-radius: 4px 4px 0 0; border-bottom: 1px solid rgba(0,0,0,.42); background: rgba(0,0,0,.09); font-size: 16px; line-height: 22px; letter-spacing: 0; color: rgba(0,0,0,.42); }
.add { width: 226px; height: 88px; margin: 38px 2px 0 0; padding-right: 2px; background: #157f7d; font-size: 32px; }

.main { flex: 1; display: flex; flex-direction: column; min-width: 0; }
.appbar { position: relative; height: 60px; display: flex; align-items: center; justify-content: space-between; padding: 0 24px 4px; background: #f5f5f5; box-shadow: 0 2px 4px -1px rgba(0,0,0,.2), 0 4px 5px rgba(0,0,0,.14), 0 1px 10px rgba(0,0,0,.12); }
h6 { font-size: 20px; font-weight: 500; letter-spacing: .1px; }
.nav-btns { display: flex; gap: 16px; }
.grid { flex: 1; display: grid; grid-template: repeat(4, 324px) / repeat(5, 432px); }
.box { display: flex; justify-content: space-between; align-items: flex-end; padding: 10px; font-size: 13px; letter-spacing: .85px; text-transform: uppercase; color: rgba(0,0,0,.5); }
.box span { line-height: 14px; padding-bottom: 9px; }
.box svg { width: 24px; height: 24px; fill: rgba(0,0,0,.6); }
.c-red { background: #f04a3e; }
.c-pink { background: #e42e5e; }
.c-purple { background: #9632ae; }
.c-deeppurple { background: #683eb6; }
.c-indigo { background: #4454b0; }
.c-blue { background: #3096f0; }
.c-lightblue { background: #24aaec; }
.c-cyan { background: #28bcd2; }
.c-teal { background: #1a9284; }
.c-green { background: #50ac54; }
.c-lightgreen { background: #8ac054; }
.c-lime { background: #ccda4a; }
.c-yellow { background: #feec50; }
.c-amber { background: #fcbe30; }
.c-orange { background: #fc9428; }
.c-deeporange { background: #f85c34; }
.c-brown { background: #76544a; }
.c-grey { background: #9e9e9e; }
.c-bluegrey { background: #607c8a; }

.backdrop { position: fixed; z-index: 2; inset: 0; display: flex; align-items: center; justify-content: center; padding: 0 3px 3px 0; background: rgba(0,0,0,.5); }
.dialog { width: 338px; height: 495px; border-radius: 4px; background: #fff; box-shadow: 0 11px 15px -7px rgba(0,0,0,.2), 0 24px 38px 3px rgba(0,0,0,.14), 0 9px 46px 8px rgba(0,0,0,.12); }
h2 { height: 68px; padding: 20px 24px 0; font-size: 21px; font-weight: 500; line-height: 32px; letter-spacing: 0; }

.picker { height: 427px; display: flex; flex-direction: column; border: 1px solid #555453; border-radius: 5px; background: #222; color: #fff; font-family: Inter, sans-serif; font-size: 16px; overflow: hidden; }
.anchors { height: 45px; flex: none; display: flex; padding: 0 6px; border-bottom: 1px solid #555453; }
.anchor { width: 36px; display: flex; justify-content: center; padding-top: 12px; color: #858585; border-bottom: 3px solid transparent; }
.anchor svg { width: 18px; height: 18px; fill: currentColor; }
.anchor .st { fill: none; stroke: currentColor; stroke-width: 1.900; }
.selected { color: #ae65c5; border-color: #ae65c5; }
.search { height: 31px; flex: none; margin: 6px 6px 0; padding: 0 11px 0 10px; display: flex; align-items: center; justify-content: space-between; border: 1px solid #555453; border-radius: 5px; background: #2f2f2f; color: #a5a5a5; letter-spacing: -.5px; }
.search svg { width: 13px; height: 13px; margin-top: 4px; fill: #b0b0b0; }
.scroll { flex: 1; min-height: 0; overflow: hidden; padding: 2px 6px 0; }
.label { height: 28px; padding: 0 6px; line-height: 28px; font-weight: 500; letter-spacing: -.25px; }
.emojis { display: grid; grid-template-columns: repeat(9, 36px); grid-auto-rows: 36px; place-items: center; }
.emojis svg { width: 22px; height: 22px; overflow: visible; }
.ln { fill: none; stroke: #75400f; stroke-width: 1.500; stroke-linecap: round; }
.thin { stroke: #c07f20; stroke-width: 1.300; }
.preview { height: 71px; flex: none; display: flex; align-items: center; padding-left: 19px; border-top: 1px solid #555453; }
.store { width: 36px; height: 36px; }
.preview-title { width: 208px; margin-left: 12px; padding-top: 2px; font-size: 25px; font-weight: 300; letter-spacing: -.85px; color: #999; white-space: nowrap; }
.skin { width: 18px; height: 18px; margin-left: 12px; border: 1px solid #4c4c4c; border-radius: 50%; background: radial-gradient(#ffc84a 0 5.700px, transparent 6.300px); }
```
